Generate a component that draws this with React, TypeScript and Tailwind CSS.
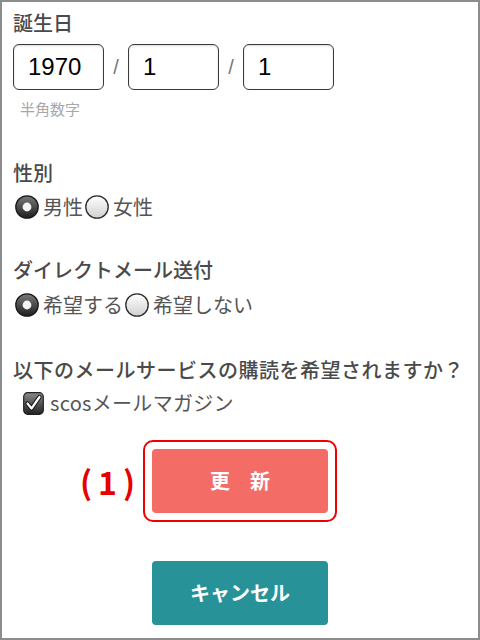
import React from "react";

const font = { fontFamily: '"Noto Sans CJK JP", "Noto Sans", sans-serif' };

function Radio({ checked }: { checked: boolean }) {
  return (
    <svg width="24" height="24" viewBox="0 0 24 24" className="shrink-0">
      <defs>
        <linearGradient id="rc" x1="0" y1="0" x2="0" y2="1">
          <stop offset="0" stopColor="#7a7a7a" />
          <stop offset="1" stopColor="#1e1e1e" />
        </linearGradient>
        <linearGradient id="ru" x1="0" y1="0" x2="0" y2="1">
          <stop offset="0" stopColor="#ffffff" />
          <stop offset="1" stopColor="#d0d0d0" />
        </linearGradient>
      </defs>
      {checked ? (
        <>
          <circle cx="12" cy="12" r="11.2" fill="url(#rc)" stroke="#1a1a1a" strokeWidth="1.3" />
          <circle cx="12" cy="12" r="4.4" fill="#f4f4f4" />
        </>
      ) : (
        <circle cx="12" cy="12" r="11.2" fill="url(#ru)" stroke="#2a2a2a" strokeWidth="1.3" />
      )}
    </svg>
  );
}

function Checkbox() {
  return (
    <svg width="21" height="23" viewBox="0 0 21 23" className="shrink-0">
      <defs>
        <linearGradient id="cb" x1="0" y1="0" x2="0" y2="1">
          <stop offset="0" stopColor="#8a8a8a" />
          <stop offset="1" stopColor="#222" />
        </linearGradient>
      </defs>
      <rect x="0.7" y="0.7" width="19.6" height="21.6" rx="4" fill="url(#cb)" stroke="#222" strokeWidth="1.2" />
      <path d="M4.5 11.5 L8.5 16.5 L16.5 5" fill="none" stroke="#111" strokeWidth="4.2" strokeLinecap="round" strokeLinejoin="round" />
      <path d="M4.5 11.5 L8.5 16.5 L16.5 5" fill="none" stroke="#fff" strokeWidth="2.2" strokeLinecap="round" strokeLinejoin="round" />
    </svg>
  );
}

function DateInput({ value }: { value: string }) {
  return (
    <div className="w-[91px] h-[46px] border border-[#3a3a3a] rounded-[6px] flex items-center pl-[14px] text-[24px] text-black shadow-[inset_0_1px_2px_rgba(0,0,0,0.15)]"
      style={{ fontFamily: '"Liberation Sans", Arial, sans-serif' }}>
      {value}
    </div>
  );
}

export default function App() {
  return (
    <div className="w-[480px] h-[640px] border-2 border-[#8c8c8c] bg-white box-border overflow-hidden text-[#505050]" style={font}>
      <div className="pl-[11px] pt-[9px]">
        <div className="text-[20px] leading-[24px] font-medium text-[#4a4a4a]">誕生日</div>
        <div className="mt-[9px] flex items-center">
          <DateInput value="1970" />
          <span className="w-[24px] text-center text-[20px] text-[#777]" style={{ fontFamily: '"Liberation Sans", Arial, sans-serif' }}>/</span>
          <DateInput value="1" />
          <span className="w-[24px] text-center text-[20px] text-[#777]" style={{ fontFamily: '"Liberation Sans", Arial, sans-serif' }}>/</span>
          <DateInput value="1" />
        </div>
        <div className="mt-[8px] ml-[7px] text-[15px] leading-[22px] text-[#a8a8a8]">半角数字</div>

        <div className="mt-[41px] text-[20px] leading-[24px] font-medium text-[#4a4a4a]">性別</div>
        <div className="mt-[9px] flex items-center h-[26px] text-[20px] text-[#555]">
          <span className="ml-[2px]"><Radio checked /></span>
          <span className="ml-[4px]">男性</span>
          <span className="ml-[2px]"><Radio checked={false} /></span>
          <span className="ml-[4px]">女性</span>
        </div>

        <div className="mt-[38px] text-[20px] leading-[24px] font-medium text-[#4a4a4a]">ダイレクトメール送付</div>
        <div className="mt-[10px] flex items-center h-[26px] text-[20px] text-[#555]">
          <span className="ml-[2px]"><Radio checked /></span>
          <span className="ml-[4px]">希望する</span>
          <span className="ml-[2px]"><Radio checked={false} /></span>
          <span className="ml-[4px]">希望しない</span>
        </div>

        <div className="mt-[40px] text-[20px] leading-[24px] font-medium text-[#4a4a4a] whitespace-nowrap tracking-[0.5px]">以下のメールサービスの購読を希望されますか？</div>
        <div className="mt-[8px] flex items-center h-[26px] text-[20px] text-[#555]">
          <span className="ml-[10px]"><Checkbox /></span>
          <span className="ml-[6px] tracking-[0.3px]">scosメールマガジン</span>
        </div>

        <div className="mt-[24px] flex items-center">
          <div className="w-[130px] flex justify-end pr-[2px] text-[32px] leading-[40px] font-bold text-[#e60000] tracking-[6px]">(1)</div>
          <div className="w-[194px] h-[82px] border-2 border-[#ee0000] rounded-[10px] p-[7px]">
            <button className="w-full h-full rounded-[4px] bg-[#f36c66] text-white text-[20px] font-bold">更　新</button>
          </div>
        </div>

        <div className="mt-[39px] flex">
          <button className="ml-[139px] w-[176px] h-[64px] rounded-[4px] bg-[#279399] text-white text-[20px] font-bold">キャンセル</button>
        </div>
      </div>
    </div>
  );
}
